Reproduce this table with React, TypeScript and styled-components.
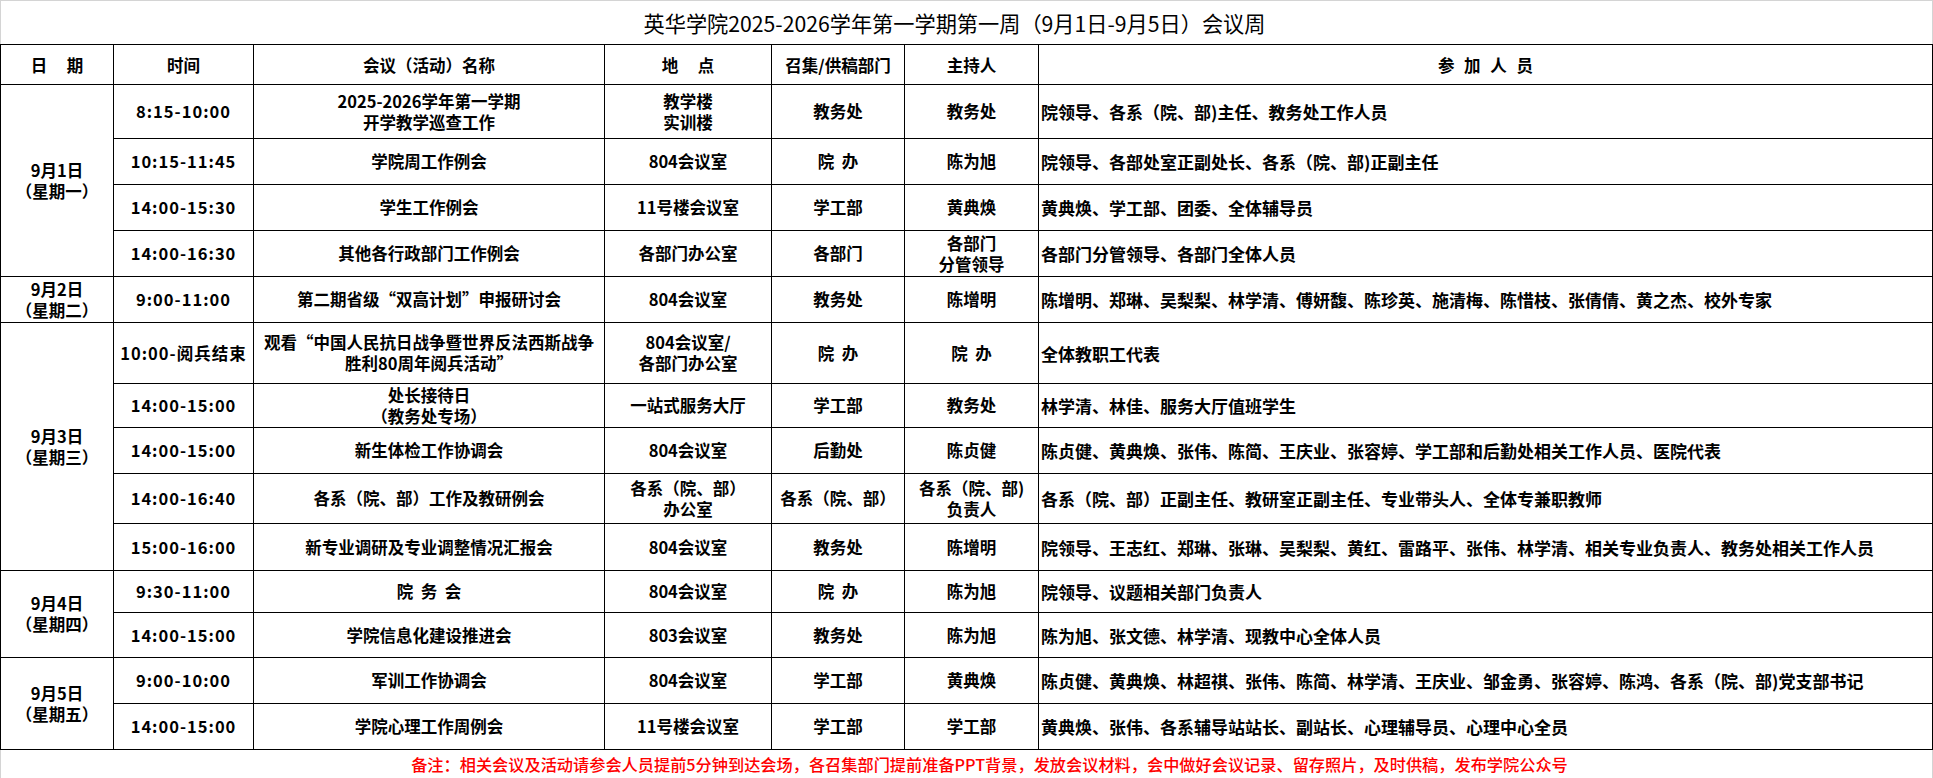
import React from 'react'
import styled, { createGlobalStyle } from 'styled-components'

const GlobalStyle = createGlobalStyle`
  html, body {
    margin: 0;
    padding: 0;
    background: #ffffff;
  }
  body {
    font-family: "Noto Sans CJK SC", "Noto Sans", sans-serif;
    color: #000000;
  }
`

type Meeting = {
  time: string
  name: string
  place: string
  dept: string
  host: string
  people: string
  h: number
}

type Day = {
  date: string
  week: string
  meetings: Meeting[]
}

const DAYS: Day[] = [
  {
    date: '9月1日',
    week: '（星期一）',
    meetings: [
      { time: '8:15-10:00', name: '2025-2026学年第一学期\n开学教学巡查工作', place: '教学楼\n实训楼', dept: '教务处', host: '教务处', people: '院领导、各系（院、部)主任、教务处工作人员', h: 54 },
      { time: '10:15-11:45', name: '学院周工作例会', place: '804会议室', dept: '院  办', host: '陈为旭', people: '院领导、各部处室正副处长、各系（院、部)正副主任', h: 46 },
      { time: '14:00-15:30', name: '学生工作例会', place: '11号楼会议室', dept: '学工部', host: '黄典焕', people: '黄典焕、学工部、团委、全体辅导员', h: 46 },
      { time: '14:00-16:30', name: '其他各行政部门工作例会', place: '各部门办公室', dept: '各部门', host: '各部门\n分管领导', people: '各部门分管领导、各部门全体人员', h: 46 },
    ],
  },
  {
    date: '9月2日',
    week: '（星期二）',
    meetings: [
      { time: '9:00-11:00', name: '第二期省级“双高计划”申报研讨会', place: '804会议室', dept: '教务处', host: '陈增明', people: '陈增明、郑琳、吴梨梨、林学清、傅妍馥、陈珍英、施清梅、陈惜枝、张倩倩、黄之杰、校外专家', h: 46 },
    ],
  },
  {
    date: '9月3日',
    week: '（星期三）',
    meetings: [
      { time: '10:00-阅兵结束', name: '观看“中国人民抗日战争暨世界反法西斯战争\n胜利80周年阅兵活动”', place: '804会议室/\n各部门办公室', dept: '院  办', host: '院  办', people: '全体教职工代表', h: 61 },
      { time: '14:00-15:00', name: '处长接待日\n（教务处专场）', place: '一站式服务大厅', dept: '学工部', host: '教务处', people: '林学清、林佳、服务大厅值班学生', h: 44 },
      { time: '14:00-15:00', name: '新生体检工作协调会', place: '804会议室', dept: '后勤处', host: '陈贞健', people: '陈贞健、黄典焕、张伟、陈简、王庆业、张容婷、学工部和后勤处相关工作人员、医院代表', h: 46 },
      { time: '14:00-16:40', name: '各系（院、部）工作及教研例会', place: '各系（院、部）\n办公室', dept: '各系（院、部）', host: '各系（院、部)\n负责人', people: '各系（院、部）正副主任、教研室正副主任、专业带头人、全体专兼职教师', h: 50 },
      { time: '15:00-16:00', name: '新专业调研及专业调整情况汇报会', place: '804会议室', dept: '教务处', host: '陈增明', people: '院领导、王志红、郑琳、张琳、吴梨梨、黄红、雷路平、张伟、林学清、相关专业负责人、教务处相关工作人员', h: 47 },
    ],
  },
  {
    date: '9月4日',
    week: '（星期四）',
    meetings: [
      { time: '9:30-11:00', name: '院  务  会', place: '804会议室', dept: '院  办', host: '陈为旭', people: '院领导、议题相关部门负责人', h: 42 },
      { time: '14:00-15:00', name: '学院信息化建设推进会', place: '803会议室', dept: '教务处', host: '陈为旭', people: '陈为旭、张文德、林学清、现教中心全体人员', h: 45 },
    ],
  },
  {
    date: '9月5日',
    week: '（星期五）',
    meetings: [
      { time: '9:00-10:00', name: '军训工作协调会', place: '804会议室', dept: '学工部', host: '黄典焕', people: '陈贞健、黄典焕、林超祺、张伟、陈简、林学清、王庆业、邹金勇、张容婷、陈鸿、各系（院、部)党支部书记', h: 46 },
      { time: '14:00-15:00', name: '学院心理工作周例会', place: '11号楼会议室', dept: '学工部', host: '学工部', people: '黄典焕、张伟、各系辅导站站长、副站长、心理辅导员、心理中心全员', h: 46 },
    ],
  },
]

const COLS = [113, 140, 351, 167, 133, 134, 894]

const Sheet = styled.div`
  width: 1933px;
  display: flex;
  flex-direction: column;
`

const Title = styled.div`
  height: 43px;
  border: 1px solid #d4d4d4;
  border-bottom: none;
  padding-right: 24px;
  display: flex;
  align-items: center;
  justify-content: center;
  font-size: 21.2px;
  font-weight: 400;
`

const Table = styled.table`
  width: 1932px;
  border-collapse: collapse;
  table-layout: fixed;
`

const Row = styled.tr<{ $h: number }>`
  height: ${(p) => p.$h}px;
`

const Cell = styled.td<{ $left?: boolean; $time?: boolean }>`
  border: 1px solid #000000;
  padding: 0 ${(p) => (p.$left ? '2px' : '0')};
  text-align: ${(p) => (p.$left ? 'left' : 'center')};
  vertical-align: middle;
  font-size: ${(p) => (p.$left ? '17px' : '16.5px')};
  font-weight: 700;
  line-height: 21px;
  white-space: pre;
  letter-spacing: ${(p) => (p.$time ? '1px' : '0')};
  overflow: hidden;
`

const HeadCell = styled.th<{ $spread?: boolean }>`
  border: 1px solid #000000;
  padding: 0;
  text-align: center;
  vertical-align: middle;
  font-size: 16.5px;
  font-weight: 700;
  white-space: pre;
  word-spacing: ${(p) => (p.$spread ? '6px' : '0')};
`

const Note = styled.div`
  height: 28px;
  border: 1px solid #d4d4d4;
  border-top: none;
  padding-left: 46px;
  display: flex;
  align-items: center;
  justify-content: center;
  color: #ff0000;
  font-size: 16.2px;
  font-weight: 500;
`

const HEADERS: { label: string; spread?: boolean }[] = [
  { label: '日  期', spread: true },
  { label: '时间' },
  { label: '会议（活动）名称' },
  { label: '地  点', spread: true },
  { label: '召集/供稿部门' },
  { label: '主持人' },
  { label: '参 加 人 员', spread: true },
]

const App = () => {
  return (
    <Sheet>
      <GlobalStyle />
      <Title>英华学院2025-2026学年第一学期第一周（9月1日-9月5日）会议周</Title>
      <Table>
        <colgroup>
          {COLS.map((w, i) => (
            <col key={i} width={w} />
          ))}
        </colgroup>
        <thead>
          <Row $h={40}>
            {HEADERS.map((h) => (
              <HeadCell key={h.label} $spread={h.spread}>
                {h.label}
              </HeadCell>
            ))}
          </Row>
        </thead>
        <tbody>
          {DAYS.map((day) =>
            day.meetings.map((m, i) => (
              <Row key={day.date + i} $h={m.h}>
                {i === 0 && (
                  <Cell rowSpan={day.meetings.length}>
                    {day.date + '\n' + day.week}
                  </Cell>
                )}
                <Cell $time>{m.time}</Cell>
                <Cell>{m.name}</Cell>
                <Cell>{m.place}</Cell>
                <Cell>{m.dept}</Cell>
                <Cell>{m.host}</Cell>
                <Cell $left>{m.people}</Cell>
              </Row>
            ))
          )}
        </tbody>
      </Table>
      <Note>
        备注：相关会议及活动请参会人员提前5分钟到达会场，各召集部门提前准备PPT背景，发放会议材料，会中做好会议记录、留存照片，及时供稿，发布学院公众号
      </Note>
    </Sheet>
  )
}

export default App
